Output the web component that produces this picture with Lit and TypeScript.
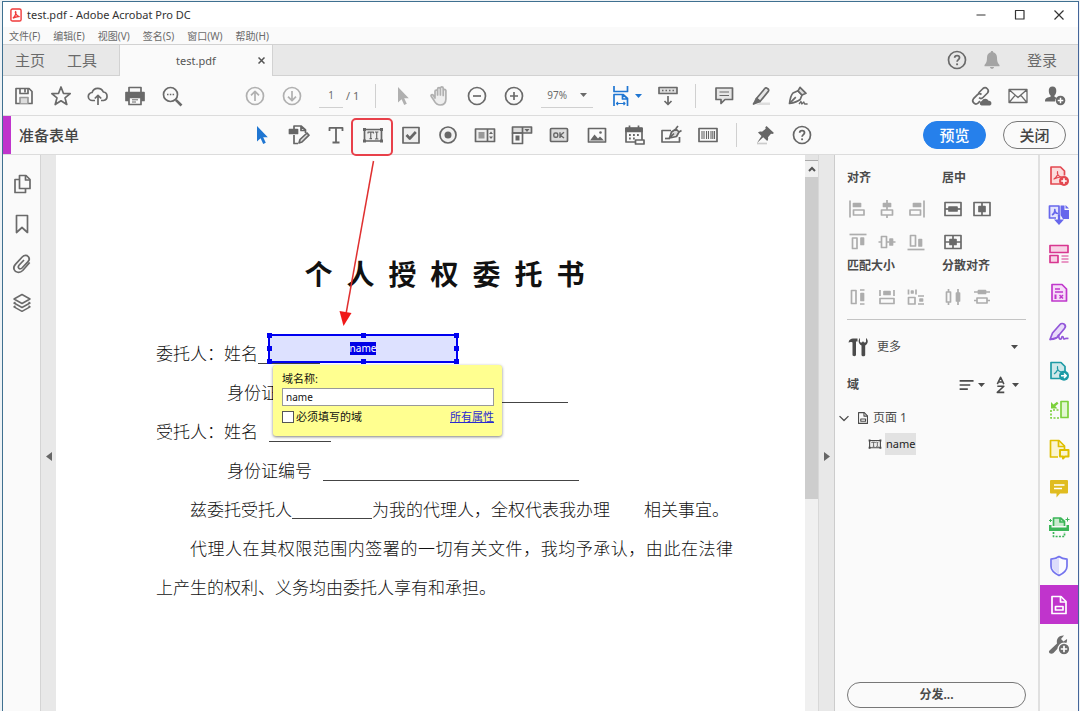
import { LitElement, html, svg, css, SVGTemplateResult } from "lit";
import { customElement, property, state } from "lit/decorators.js";
import { classMap } from "lit/directives/class-map.js";

/* Every glyph is drawn on a 22 x 22 grid and inherits currentColor. */
const glyphs: Record<string, SVGTemplateResult> = {
  save: svg`<path d="M3 3.500h13l3 3v12H3z"/><path d="M7 3.500v5h8v-5"/><path d="M7 18.500v-6h8v6" fill="#ddd" stroke="#999"/><path d="M12 4v3.500"/>`,
  star: svg`<path d="M11 2l2.400 6.300 6.800.4-5.200 4.200 1.800 6.600-5.800-3.700-5.800 3.700 1.800-6.600-5.200-4.200 6.800-.4z"/>`,
  cloud: svg`<path d="M8 15.500H5.500a4 4 0 0 1-.4-8A6 6 0 0 1 16.300 7a4.300 4.300 0 0 1 .2 8.500H14"/><path d="M11 20v-9.500M7.800 13.500l3.200-3.200 3.200 3.200"/>`,
  print: svg`<path d="M5 7V2.500h12V7"/><path d="M2 7.500h18v8h-2.500V12h-13v3.500H2z" fill="currentColor"/><path d="M5 12.500h12v7H5z" fill="#fafafa"/><path d="M8 14.800h6M8 17h4" stroke-width="1"/>`,
  find: svg`<circle cx="9.500" cy="9.500" r="7"/><path d="M14.800 14.800l5.700 5.700" stroke-width="2.600"/><path d="M6 9.500h1.500M8.800 9.500h1.500M11.600 9.500h1.500" stroke-width="1.700"/>`,
  up: svg`<circle cx="11" cy="11" r="8.500"/><path d="M11 16V6.500M7 10.300l4-4 4 4"/>`,
  down: svg`<circle cx="11" cy="11" r="8.500"/><path d="M11 6v9.500M7 11.700l4 4 4-4"/>`,
  pointer: svg`<path d="M6 2v15.500l3.600-3.200 2.600 5.600 2.600-1.200-2.600-5.500h4.600z" fill="currentColor" stroke="none"/>`,
  hand: svg`<path d="M6 13V6.300a1.300 1.300 0 0 1 2.600 0V10 4a1.400 1.400 0 0 1 2.800 0v6-6.700a1.400 1.400 0 0 1 2.800 0V10.500 5.500a1.400 1.400 0 0 1 2.700 0v8.500c0 4-2.300 6-5.700 6-3 0-4.500-1.500-6-4.200l-3-4.500c-.8-1.600 1-2.300 2-1.200z" fill="#eee"/>`,
  minus: svg`<circle cx="11" cy="11" r="8.500"/><path d="M7 11h8"/>`,
  plus: svg`<circle cx="11" cy="11" r="8.500"/><path d="M7 11h8M11 7v8"/>`,
  fit: svg`<path d="M4 1v5.500h13.500V1"/><path d="M4 21V9.500h9l4.500 4V21M12.500 9.500v4.500h5"/><path d="M6.500 18.500h8.500M8 17l-1.500 1.500L8 20M13.500 17l1.500 1.500-1.500 1.500" stroke-width="1.200"/>`,
  scrollmode: svg`<path d="M2 2.500h18v6H2z" fill="#ddd"/><path d="M5 5.500h1.500M8.500 5.500H10M12 5.500h1.500M15.500 5.500H17"/><path d="M11 11v8.500M7.500 16l3.500 3.500 3.500-3.500"/>`,
  comment: svg`<path d="M3 3h16.500v11.500H12l-4 4v-4H3z" fill="#e6e6e6"/><path d="M6.500 7h9.500M6.500 10.500h9.500" stroke-width="1.200"/>`,
  highlight: svg`<path d="M10 17.500h10v2.500H6z" fill="#ddd" stroke="none"/><path d="M6.500 13.500L14.800 3.500a1.700 1.700 0 0 1 2.500-.2l.8.700a1.700 1.700 0 0 1 .2 2.400L10 16.500z" fill="#e6e6e6"/><path d="M6.500 13.500l3.500 3-6.500 2.500 1.200-2z" fill="currentColor"/>`,
  pen: svg`<path d="M2.500 18.500c.5-4 1.500-8.500 3.500-10.500l5-2.200 4 4.200-1.800 4.500c-2.500 2-6.500 3.300-10.700 4z"/><path d="M2.800 18.200l6-6M11 5.800l2-3.500 6 6-4 1.700z" fill="#ddd"/><path d="M12 19l2-2.500.8 2.500 2-2 .8 2h3" stroke-width="1.300"/>`,
  link: svg`<path d="M8.500 8l4.500-4.500a3.200 3.200 0 0 1 4.500 4.500L13 12.500a3 3 0 0 1-4 .2"/><path d="M11.500 9.500a3 3 0 0 0-4 .2L3.500 13.700a3.200 3.200 0 0 0 4.500 4.500l2-2"/><path d="M11.500 20.500a2.300 2.300 0 0 1 .3-4.500 3.800 3.800 0 0 1 6.800-.2 2.500 2.500 0 0 1 1.500 4.700z" fill="currentColor" stroke="none"/>`,
  mail: svg`<path d="M2 4.500h18v13H2zM2.500 5l8.500 7.500L19.500 5M2.500 17l5.800-6.800M19.500 17l-5.800-6.800" stroke-width="1.300"/>`,
  adduser: svg`<path d="M8.500 1.500c2.600 0 4 1.800 3.800 4.500-.1 2-.8 3.600-1.800 4.500v1.200l2 1A5.500 5.500 0 0 0 11 16.500H1c0-3 .8-3.600 5.600-4.800v-1.200C5.500 9.600 4.900 8 4.800 6c-.2-2.700 1.100-4.500 3.700-4.500z" fill="currentColor" stroke="none"/><circle cx="16.500" cy="15.500" r="4.800" fill="currentColor" stroke="none"/><path d="M13.700 15.500h5.600M16.500 12.700v5.600" stroke="#fff" stroke-width="1.500"/>`,
  help: svg`<circle cx="11" cy="11" r="8.500"/><path d="M8.700 8.800c0-3 4.800-3 4.800 0 0 1.800-2.400 1.900-2.400 4" stroke-width="1.800"/><path d="M11.100 14.400v1.800" stroke-width="1.900"/>`,
  bell: svg`<path d="M11 2c.8 0 1.200.5 1.200 1.300 2.600.6 3.800 2.700 3.800 5.200 0 4 .6 5.500 2.500 7.500v1.200h-15V16C5.400 14 6 12.500 6 8.500c0-2.500 1.200-4.600 3.800-5.200C9.800 2.500 10.200 2 11 2zM9 18h4c0 2.400-4 2.400-4 0z" fill="currentColor" stroke="none"/>`,
  editpage: svg`<path d="M6 5V2h7l4.500 4v3M6 11v8.500h4M13 2v4.500h4.500"/><path d="M1.500 5.500h8v4h-8z" fill="currentColor"/><path d="M11 19l1-3.500 7-6.500 2 2.200-7 6.800z" fill="#ddd"/>`,
  text: svg`<path d="M4.500 7V3.800h13V7M11 3.800v14.500M7.500 18.500h7" stroke-width="1.800"/>`,
  field: svg`<path d="M2.500 5.500h17v11.500h-17z" fill="#eee"/><path d="M6 9.500V8.200h5.500v1.300M8.750 8.200v6.500M7.500 14.700h2.500M13 8h1l.7.700.7-.7h1M14.700 8.700v5.600M13 15h1l.7-.7.7.7h1" stroke-width="1.200"/><path d="M1 4h3v3H1zM18 4h3v3h-3zM1 15.500h3v3H1zM18 15.500h3v3h-3z" fill="currentColor" stroke="none"/>`,
  check: svg`<path d="M3 3.500h16v15.500H3z" fill="#eee"/><path d="M6.500 11l3.300 3.500 6-6.500" stroke-width="2.600"/>`,
  radio: svg`<circle cx="11" cy="11" r="8" fill="#f0f0f0"/><circle cx="11" cy="11" r="3.500" fill="currentColor" stroke="none"/>`,
  list: svg`<path d="M1.500 5h19v12.500h-19z" fill="#eee"/><path d="M13.500 5v12.500"/><path d="M4.500 8h6v6.500h-6z" fill="#999" stroke="none"/><path d="M15 10l2-2.500 2 2.500zM15 12.500l2 2.500 2-2.500z" fill="currentColor" stroke="none"/>`,
  combo: svg`<path d="M1.500 3h19v6h-19z" fill="#ddd"/><path d="M1.500 9h10v10.500h-10zM11.500 3v6"/><path d="M13.500 5h5l-2.500 3zM4.500 11.500h4v5h-4z" fill="currentColor" stroke="none"/>`,
  okay: svg`<rect x="2.500" y="4.500" width="17" height="13" rx="1" fill="#ddd"/><rect x="5.800" y="9" width="4" height="4.300" rx="1.600" stroke-width="1.400"/><path d="M12 8.300v5.700M16 8.300l-3.600 2.900 3.600 2.800" stroke-width="1.400"/>`,
  image: svg`<path d="M2.500 4.500h17v13.500h-17z"/><path d="M4 16.500l4.500-6 3.500 4 2-2 4 4z" fill="currentColor" stroke="none"/><circle cx="14.500" cy="8.500" r="1.300" fill="currentColor" stroke="none"/>`,
  date: svg`<path d="M3 4.500h16v13.500H3z"/><path d="M3 4h16v3.500H3z" fill="currentColor"/><path d="M6.500 1.500v4M15.500 1.500v4"/><path d="M6 11h1.800M10 11h1.800M14 11h1.800M6 14.500h1.800M10 14.500h1.800" stroke-width="1.800"/><path d="M12.500 16h8.500v4h-8.500z" fill="#fafafa"/>`,
  sign: svg`<path d="M11 6.500H2v11.500h17.500v-5"/><path d="M5 14.500h5"/><path d="M9.500 14l2-6 4.500-3 3 3-2.500 4.500zM10 13.500l4-4M16 4.500l2-2.500M19 8l2.500-1.500" fill="#ddd"/>`,
  barcode: svg`<path d="M2 4.500h18v13H2z"/><path d="M5 7v8M7 7v8M9.500 7v8M11.500 7v8M14 7v8M15.800 7v8M17.500 7v8" stroke-width="1.100"/>`,
  pin: svg`<path d="M3 19.500h10" stroke="#ccc"/><path d="M12.500 2l7.500 7-1.500 1-1.500-.3-3 3.500c.4 1.800 0 3-.8 3.800l-4-3.800L3 19l4.500-7-3.500-3.500c1-1 2.400-1.200 4-.8l3.700-3-.4-1.500z" fill="currentColor" stroke="none"/>`,
  pages: svg`<path d="M8.500 2.500h6.500l4 4v9H8.500z"/><path d="M14.500 2.500V7H19"/><path d="M8 6.500H4v13h10.500v-4"/>`,
  bookmark: svg`<path d="M5.500 2.500h11v17L11 14.500l-5.500 5z"/>`,
  clip: svg`<path d="M18.700 9.500l-7 8c-3 3-7.500 2-8.600-1-.8-2 0-3.800 1.300-5.200l6.800-7.300c2-2 4.800-2 6.200-.3 1.300 1.600 1 3.500-.4 5l-6 6.300c-1 1-2.500 1-3.200.2-.8-.9-.5-2.200.4-3.200l4.800-5"/>`,
  layers: svg`<path d="M11 1.500l8 4.500-8 4.500L3 6zM4.500 9L3 10l8 4.500 8-4.500-1.500-1M4.500 12.800L3 13.800l8 4.500 8-4.500-1.500-1" stroke-width="1.500"/>`,
  alignL: svg`<path d="M3 2.500v17"/><path d="M6.500 5.500h7v3h-7z" fill="currentColor"/><path d="M6.500 12h10.500v5H6.500z"/>`,
  alignC: svg`<path d="M11 2v3M11 9v3M11 17v3"/><path d="M7.500 5.500h7v3h-7z" fill="currentColor"/><path d="M5.500 12h11v5h-11z"/>`,
  alignR: svg`<path d="M19 2.500v17"/><path d="M8.500 5.500h7v3h-7z" fill="currentColor"/><path d="M5 12h10.500v5H5z"/>`,
  alignT: svg`<path d="M2.500 3.500h17"/><path d="M5.500 7h4.500v10.500H5.500z"/><path d="M14 7h2.500v6.500H14z" fill="currentColor"/>`,
  alignM: svg`<path d="M2.500 11h3M10.500 11h3M17 11h2.500"/><path d="M5.500 5.500h5v11h-5z"/><path d="M14 8h2.500v6H14z" fill="currentColor"/>`,
  alignB: svg`<path d="M2.500 18.500h17"/><path d="M5.500 4.500h5V15h-5z"/><path d="M14 8.500h2.500V15H14z" fill="currentColor"/>`,
  centerV: svg`<path d="M3 4.500h16v13H3z"/><path d="M7 9h8v4H7z" fill="currentColor"/><path d="M3 11h16"/>`,
  centerH: svg`<path d="M3 4.500h16v13H3z"/><path d="M8 8.500h6v5H8z" fill="currentColor"/><path d="M11 4.500v13"/>`,
  centerB: svg`<path d="M3 4.500h16v13H3z"/><path d="M8 8.500h6v5H8z" fill="currentColor"/><path d="M11 4.500v13M3 11h16"/>`,
  matchH: svg`<path d="M4.500 4.500h4.500v13H4.500z"/><path d="M13 4h4.500M13 18h4.500"/><path d="M14 7.500h2.500v7H14z" fill="currentColor"/>`,
  matchW: svg`<path d="M4 4v6M18 4v6M4 12.500h14v5H4z"/><path d="M8 5.500h6v3H8z" fill="currentColor"/>`,
  matchB: svg`<path d="M3.500 3.500v5M11 3.500v5M13 10h6M13 18h6M3.500 11.500H10V18H3.500z"/><path d="M6.500 5h1.500v2H6.500zM15 13h2.500v2H15z" fill="currentColor"/>`,
  distH: svg`<path d="M6.500 3v3M6.500 16v3M16 3v4M16 15v4M4.500 6h4v10h-4z"/><path d="M14.500 7h3v8h-3z" fill="currentColor"/>`,
  distV: svg`<path d="M3 6h4M15 6h4M3 14.500h3M16 14.500h3M6 12h10v5H6z"/><path d="M7.500 4.500h7v3h-7z" fill="currentColor"/>`,
  tools: svg`<path d="M1.500 6.500C2 3.500 4 2.500 6 2.500h4.500v3H9V19c0 1.500-3.500 1.500-3.500 0V6.500c-1.500-.8-2.500-.5-4 0zM13 2v3.500c0 1.300 2.500 1.300 2.500 0h1c0 1.300 2.500 1.300 2.500 0V2c2.500 2 2.500 5.500-.8 7.500V19c0 1.800-3.700 1.800-3.700 0V9.500C11 7.500 11 4 13 2z" fill="currentColor" stroke="none"/>`,
  order: svg`<path d="M2 6h17M2 11h13M2 16h10" stroke-width="2"/>`,
  sort: svg`<path d="M6.500 10L10.500 1.500l4 8.500M8 7.300h5M6.500 12.500h8l-8 7.500h8.500" stroke-width="1.900"/>`,
  chevron: svg`<path d="M4 8l7 7 7-7" stroke-width="2"/>`,
  formpage: svg`<path d="M4 2.500h9l5 5v12H4z"/><path d="M12.500 2.500v5.500H18"/><path d="M7.500 12.500h7.500v3.500H7.500z"/>`,
  logo: svg`<rect x="3" y="1.500" width="16" height="19" rx="2.500" stroke-width="2.200" fill="#fff"/><path d="M6 16c3-2 6-8 4.500-10.500-2 1 1.500 7 5.500 8-3-.7-6 .5-10 2.500" stroke-width="2"/>`,
  createpdf: svg`<path d="M13 19H3V2h9.500l4 4v4.500" fill="#fbdcdc"/><path d="M6 14c2.500-1.500 4-4.500 3.500-7.500-.6 3 1 5.300 4.500 5.500-3 0-5 .5-8 2z" stroke-width="1.200"/><circle cx="16" cy="16" r="5" fill="currentColor" stroke="none"/><path d="M13.300 16h5.400M16 13.300v5.400" stroke="#fff" stroke-width="1.600"/>`,
  combine: svg`<path d="M8 14H1.500V2H11v9" fill="#e4e4fd"/><path d="M4 11c2-1 3-3.500 2.800-5.500 0 2.500 1 4 3.200 4"/><path d="M12.500 1.500h4v4.500h4.500v9H15l-2.500-4z" fill="currentColor" stroke="none"/><path d="M17.500 1l3.500 3.500h-3.500z" fill="currentColor" stroke="none"/><path d="M11 11v5" stroke-width="2.400"/><path d="M6 15.500h10L11 21z" fill="currentColor" stroke="none"/>`,
  organize: svg`<path d="M2 2.500h18v7H2zM2 12.500h8v7H2z" fill="#f8d3e6"/><path d="M13.500 13h7M13.500 16h7M13.500 19h7" stroke-width="1.200"/>`,
  editpdf: svg`<path d="M4 2.500h10l4.500 4.500v12H4z" fill="#f6dcf8"/><path d="M7 7h5M7 10h8" stroke-width="1.500"/><path d="M7.500 12.500v4.500" stroke-width="2"/><path d="M11.500 13l3.500 3.500M15 13l-3.500 3.500" stroke-width="1.500"/>`,
  signpen: svg`<path d="M2 18.500l2.500-6.500L12 3.500a3 3 0 0 1 4.500 4L9 16.500z" fill="#e8dafa"/><path d="M2 18.500c4 0 7.500-.5 8.500-4.500.5 3 .5 4.500 2.500 4 1-.3 0-2.500 1.500-2.500s.3 3 2 2.500 1.500-1 4-.5" stroke-width="1.600"/>`,
  exportpdf: svg`<path d="M13 18.500H3v-16h10l4 4v4.500" fill="#cfe8ea"/><path d="M6 14c2.500-1.500 4-4.500 3.500-7.500-.6 3 1 5.300 4.500 5.500" stroke-width="1.200"/><circle cx="16" cy="15.800" r="5" fill="currentColor" stroke="none"/><path d="M13 15.800h5M16 13.500l2.300 2.300L16 18" stroke="#fff" stroke-width="1.500"/>`,
  rearrange: svg`<path d="M13 2.500h7v16h-7z" fill="#e2f7d2"/><path d="M3 11v8h8M5 11h6.500" stroke-dasharray="2 1.500"/><path d="M3 3v6.500h6.500L7.300 7.300 10.500 4.500 9 2.800 5.500 5.500z" fill="currentColor" stroke="none"/>`,
  sendcomment: svg`<path d="M10 19H2.500V2.500H11L16.500 8v3" fill="#faf4cf"/><path d="M10.500 2.500V8.500h6"/><path d="M12 12h8.500v6.500H17l-2 2v-2h-3z" fill="#faf4cf" stroke-width="2"/>`,
  note: svg`<path d="M3 3h16q1 0 1 1v11.500q0 1-1 1h-7l-3.500 4v-4H3q-1 0-1-1V4q0-1 1-1z" fill="currentColor" stroke="none"/><path d="M6 8h10.500M6 11.500h8" stroke="#fff" stroke-width="1.400"/>`,
  scan: svg`<path d="M5.500 10V2h7l4 3.500V10" fill="#c9ebce"/><path d="M12 2v4h4"/><path d="M1 9h2.500v2.500h15V9H21v6H1z" fill="currentColor" stroke="none"/><path d="M5.500 16v4.500h11V16" stroke-dasharray="2 1.300"/><path d="M2.500 3v3M1 4.500h3M19.500 1.500v4M17.500 3.500h4" stroke-width="1"/>`,
  shield: svg`<path d="M11 1.500c2.500 1.800 5 2.500 8 2.700v7c0 4-3.500 7-8 9.300-4.500-2.300-8-5.300-8-9.300v-7c3-.2 5.500-.9 8-2.700z" fill="#fafaff"/><path d="M11 3v16c-4-2.300-7-4.700-7-8V5c3 0 5-.8 7-2z" fill="#dcdcfb" stroke="none"/>`,
  wrench: svg`<path d="M1.500 17.500L9 10.500C8 6 11 2 16 2.500L13 6l2.500 2.500L19 6c.5 3-1 6-4.500 6.700L12 13l-6.500 7c-2.500 2-6-.5-4-2.500z" fill="currentColor" stroke="none"/><circle cx="16" cy="16" r="5.800" fill="currentColor" stroke="#fafafa" stroke-width="1.300"/><path d="M12.800 16h6.400M16 12.800v6.400" stroke="#fff"/>`,
};

const icon = (name: string, size = "") =>
  html`<svg class="icon ${size}" viewBox="0 0 22 22" aria-hidden="true">${glyphs[name]}</svg>`;

const caret = html`<svg class="caret" viewBox="0 0 7 4" aria-hidden="true"><path d="M0 0h7L3.500 4z" /></svg>`;

const iconStyles = css`
  .icon {
    width: 22px;
    height: 22px;
    display: block;
    flex: none;
    fill: none;
    stroke: currentColor;
    stroke-width: 1.7;
    stroke-linejoin: round;
  }
  .icon.small {
    width: 14px;
    height: 14px;
  }
  .icon.medium {
    width: 18px;
    height: 18px;
  }
  .caret {
    width: 7px;
    height: 4px;
    display: block;
    flex: none;
    fill: currentColor;
  }
  * {
    box-sizing: border-box;
  }
  button,
  input,
  select {
    font: inherit;
    color: inherit;
    margin: 0;
    padding: 0;
    border: 0;
    background: none;
    border-radius: 0;
  }
  button {
    display: flex;
    align-items: center;
    justify-content: center;
  }
`;

@customElement("form-document")
class FormDocument extends LitElement {
  @property() fieldName = "name";

  static styles = [
    iconStyles,
    css`
      :host {
        display: block;
        position: relative;
        flex: 1;
        min-width: 0;
        overflow: hidden;
        background: #fff;
        color: #111;
        padding: 99px 72px 0 100px;
        font-size: 17px;
        line-height: 39px;
        font-weight: 300;
      }
      h1 {
        margin: 0 0 40px;
        font-size: 28px;
        line-height: 40px;
        font-weight: 700;
        text-align: center;
        white-space: nowrap;
      }
      p {
        margin: 0;
        text-align: justify;
      }
      .body {
        text-indent: 2em;
      }
      .row {
        display: flex;
        align-items: center;
        white-space: nowrap;
      }
      .indent {
        padding-left: 71px;
      }
      .blank {
        height: 20px;
        width: 256px;
        border-bottom: 1px solid #444;
      }
      .blank.short {
        width: 62px;
      }
      .gap {
        margin-left: 11px;
      }
      .inline-blank {
        display: inline-block;
        width: 80px;
        height: 16px;
        border-bottom: 1px solid #444;
        vertical-align: -3px;
      }
      .space {
        display: inline-block;
        width: 34px;
      }
      .field {
        position: absolute;
        left: 212px;
        top: 179px;
        width: 190px;
        height: 29px;
        border: 2px solid #0000f0;
        background: #dde1ff;
        display: flex;
        align-items: center;
        justify-content: center;
        font-size: 10px;
        line-height: 13px;
        font-weight: 400;
      }
      .field-name {
        background: #0000e6;
        color: #fff;
        height: 13px;
      }
      .handle {
        position: absolute;
        width: 5px;
        height: 5px;
        background: #0000f0;
      }
      .n { top: -3px; }
      .s { bottom: -3px; }
      .m { top: 10px; }
      .w { left: -3px; }
      .e { right: -3px; }
      .c { left: 91px; }
      .popup {
        position: absolute;
        left: 217px;
        top: 210px;
        width: 229px;
        padding: 6px 8px 11px 9px;
        border-radius: 3px;
        background: #ffff90;
        box-shadow: 0 1px 3px rgba(0, 0, 0, 0.5);
        font-size: 11px;
        line-height: 16px;
        font-weight: 400;
      }
      .caption {
        display: block;
      }
      .name-input {
        display: block;
        width: 100%;
        height: 18px;
        margin: 1px 0 3px;
        padding: 0 3px;
        border: 1px solid #999;
        background: #fff;
        font-size: 10px;
      }
      .options {
        display: flex;
        justify-content: space-between;
      }
      .required {
        display: flex;
        align-items: center;
        gap: 2px;
      }
      .box {
        appearance: none;
        width: 12px;
        height: 12px;
        border: 1px solid #555;
        background: #fff;
      }
      a {
        color: #2a2ad0;
      }
    `,
  ];

  render() {
    const handles = ["n w", "n c", "n e", "m w", "m e", "s w", "s c", "s e"];
    return html`
      <h1>个&ensp;人&ensp;授&ensp;权&ensp;委&ensp;托&ensp;书</h1>
      <div class="row">委托人：姓名<span class="blank short"></span></div>
      <div class="row indent">身份证编号<span class="blank"></span></div>
      <div class="row">受托人：姓名<span class="blank short gap"></span></div>
      <div class="row indent">身份证编号<span class="blank gap"></span></div>
      <p class="body">兹委托受托人<span class="inline-blank"></span>为我的代理人，全权代表我办理<span class="space"></span>相关事宜。</p>
      <p class="body">代理人在其权限范围内签署的一切有关文件，我均予承认，由此在法律上产生的权利、义务均由委托人享有和承担。</p>
      <div class="field">
        <span class="field-name">${this.fieldName}</span>
        ${handles.map((h) => html`<span class="handle ${h}"></span>`)}
      </div>
      <div class="popup">
        <label class="caption" for="field-name">域名称:</label>
        <input
          id="field-name"
          class="name-input"
          .value=${this.fieldName}
          @input=${(e: Event) => (this.fieldName = (e.target as HTMLInputElement).value)}
        />
        <div class="options">
          <label class="required"><input class="box" type="checkbox" />必须填写的域</label>
          <a href="#properties">所有属性</a>
        </div>
      </div>
    `;
  }
}

@customElement("form-panel")
class FormPanel extends LitElement {
  static styles = [
    iconStyles,
    css`
      :host {
        display: flex;
        flex-direction: column;
        flex: none;
        width: 204px;
        padding: 15px 12px 4px;
        background: #fafafa;
        border-left: 1px solid #ccc;
        color: #4b4b4b;
        font-size: 12px;
        line-height: 16px;
      }
      .groups {
        display: grid;
        grid-template-columns: 95px 1fr;
        padding-bottom: 8px;
        border-bottom: 1px solid #c4c4c4;
      }
      h2 {
        margin: 0;
        font-size: 12px;
        line-height: 16px;
        font-weight: 700;
      }
      .icons {
        display: grid;
        grid-template-columns: repeat(3, 29px);
        grid-auto-rows: 33px;
        color: #adadad;
        padding-top: 6px;
        margin-left: -4px;
      }
      .icons.tall {
        height: 72px;
      }
      .icons.short {
        height: 37px;
      }
      .icons.strong {
        color: #6a6a6a;
      }
      .more {
        display: flex;
        height: 53px;
        gap: 8px;
        padding: 0 8px 0 0;
        font-weight: 400;
      }
      .more-label {
        flex: 1;
        text-align: left;
      }
      .fields-head {
        display: flex;
        align-items: center;
        height: 24px;
      }
      .fields-head h2 {
        flex: 1;
      }
      .menu {
        gap: 1px;
        margin-left: 7px;
      }
      .fields-head .menu:last-child {
        margin-right: 7px;
      }
      .menu .medium {
        margin-right: 1px;
      }
      .tree {
        margin: 10px 0 0;
        padding: 0;
        list-style: none;
      }
      .node {
        display: flex;
        align-items: center;
        height: 22px;
        gap: 3px;
      }
      .parent {
        margin-left: -10px;
      }
      .leaf {
        height: 30px;
        padding-left: 21px;
      }
      .parent .icon + .icon {
        margin-left: 2px;
      }
      .selected {
        background: #e2e2e2;
        padding: 3px 1px;
        color: #222;
        font-size: 11px;
      }
      .distribute {
        margin-top: auto;
        height: 26px;
        border: 1px solid #777;
        border-radius: 13px;
        font-weight: 700;
      }
    `,
  ];

  tools(names: string[]) {
    return names.map((n) => html`<button aria-label=${n}>${icon(n)}</button>`);
  }

  render() {
    return html`
      <div class="groups">
        <h2>对齐</h2>
        <h2>居中</h2>
        <div class="icons tall">
          ${this.tools(["alignL", "alignC", "alignR", "alignT", "alignM", "alignB"])}
        </div>
        <div class="icons strong tall">${this.tools(["centerV", "centerH"])}<span></span>${this.tools(["centerB"])}</div>
        <h2>匹配大小</h2>
        <h2>分散对齐</h2>
        <div class="icons short">${this.tools(["matchH", "matchW", "matchB"])}</div>
        <div class="icons short">${this.tools(["distH", "distV"])}</div>
      </div>
      <button class="more">${icon("tools")}<span class="more-label">更多</span>${caret}</button>
      <div class="fields-head">
        <h2>域</h2>
        <button class="menu" aria-label="order">${icon("order", "medium")}${caret}</button>
        <button class="menu" aria-label="sort">${icon("sort", "medium")}${caret}</button>
      </div>
      <ul class="tree">
        <li class="node parent">${icon("chevron", "small")}${icon("formpage", "small")}<span>页面 1</span></li>
        <li class="node leaf">${icon("field", "small")}<span class="selected">name</span></li>
      </ul>
      <button class="distribute">分发...</button>
    `;
  }
}

@customElement("app-root")
class AppRoot extends LitElement {
  @state() tool = "pointer";

  static styles = [
    iconStyles,
    css`
      :host {
        display: flex;
        flex-direction: column;
        height: 100vh;
        padding: 1px 1px 0 2px;
        background: #eef2f5;
        color: #6a6a6a;
        font-family: "Noto Sans", "Noto Sans CJK SC", sans-serif;
        font-size: 11px;
        line-height: 16px;
      }
      .window {
        display: flex;
        flex-direction: column;
        flex: 1;
        min-height: 0;
        border: 1px solid #3f7090;
        border-right-color: #44659a;
        border-bottom: 0;
        background: #fafafa;
      }
      .titlebar {
        display: flex;
        align-items: center;
        height: 25px;
        padding: 0 8px 0 6px;
        gap: 4px;
        background: #fff;
        color: #333;
      }
      .logo {
        color: #f03a3a;
      }
      .title {
        flex: 1;
      }
      .winbtn {
        width: 23px;
        margin-left: 12px;
      }
      .menubar {
        display: flex;
        height: 17px;
        padding: 0 6px;
        gap: 13px;
        font-size: 10px;
      }
      .tabs {
        display: flex;
        align-items: center;
        height: 32px;
        background: #e8e8e8;
        border: 1px solid #d2d2d2;
        border-width: 1px 0;
        font-size: 15px;
      }
      .home {
        margin-left: 12px;
      }
      .home + .home {
        margin-left: 22px;
        margin-right: 22px;
      }
      .doc-tab {
        align-self: stretch;
        display: flex;
        align-items: center;
        width: 154px;
        margin-bottom: -1px;
        padding: 0 7px 0 56px;
        background: #fafafa;
        border: 1px solid #d2d2d2;
        border-width: 0 1px;
        font-size: 11px;
        color: #555;
      }
      .doc-tab span {
        flex: 1;
      }
      .cross {
        width: 7px;
        height: 7px;
        fill: none;
        stroke: #555;
        stroke-width: 1.5;
      }
      .account {
        display: flex;
        align-items: center;
        margin-left: auto;
        padding-right: 21px;
        gap: 13px;
      }
      .bell {
        color: #a4a4a4;
      }
      .login {
        margin-left: 11px;
      }
      .bar {
        display: flex;
        align-items: center;
        height: 40px;
        border-bottom: 1px solid #dcdcdc;
      }
      .bar.form {
        height: 39px;
        color: #666;
      }
      .tool {
        width: 37px;
        height: 38px;
        position: relative;
      }
      .file-tools {
        display: flex;
        margin: 0 46px 0 2px;
      }
      .faint {
        color: #b0b0b0;
      }
      .blue {
        color: #1f76d2;
      }
      .page-input {
        width: 24px;
        height: 25px;
        margin: 0 3px 0 9px;
        text-align: center;
        font-size: 10px;
        border-bottom: 1px solid #d0d0d0;
      }
      .rule {
        width: 1px;
        height: 24px;
        margin: 0 9px;
        background: #d0d0d0;
      }
      .first-rule {
        margin: 0 8px 0 16px;
      }
      .zoom {
        display: flex;
        align-items: center;
        width: 52px;
        height: 25px;
        margin: 0 9px;
        border-bottom: 1px solid #d0d0d0;
        font-size: 10px;
      }
      .zoom-select {
        appearance: none;
        flex: 1;
        min-width: 0;
        padding-left: 6px;
      }
      .zoom .caret {
        margin-right: 6px;
      }
      .tool .icon + .caret {
        margin-left: 3px;
      }
      .wide {
        width: 47px;
      }
      .share {
        display: flex;
        margin-left: auto;
        padding-right: 5px;
      }
      .form-title {
        align-self: stretch;
        display: flex;
        align-items: center;
        width: 240px;
        margin: 0;
        padding-left: 8px;
        border-left: 8px solid #c034cc;
        font-size: 15px;
        font-weight: 500;
        color: #444;
      }
      .form-tools {
        display: flex;
        width: 484px;
      }
      .form-tools .tool {
        flex: 1;
      }
      .marked {
        position: absolute;
        left: -4px;
        top: 2px;
        width: 42px;
        height: 38px;
        border: 2px solid #e8404a;
        border-radius: 5px;
        z-index: 2;
      }
      .arrow {
        position: absolute;
        left: -20px;
        top: 40px;
        width: 44px;
        height: 172px;
        z-index: 2;
        pointer-events: none;
      }
      .actions {
        display: flex;
        gap: 17px;
        margin-left: auto;
        padding-right: 12px;
      }
      .pill {
        width: 63px;
        height: 28px;
        border: 1px solid #777;
        border-radius: 14px;
        font-size: 15px;
        font-weight: 500;
        color: #444;
      }
      .primary {
        background: #2680eb;
        border-color: #2680eb;
        color: #fff;
      }
      .main {
        display: flex;
        flex: 1;
        min-height: 0;
      }
      .nav {
        display: flex;
        flex-direction: column;
        width: 38px;
        padding-top: 9px;
        border-right: 1px solid #d4d4d4;
      }
      .nav .tool {
        height: 40px;
      }
      .gutter {
        display: flex;
        align-items: center;
        width: 15px;
        padding: 46px 0 0 5px;
        background: #e8e8e8;
        color: #666;
      }
      .edge {
        width: 6px;
        height: 9px;
        fill: currentColor;
      }
      .scroll {
        display: flex;
        flex-direction: column;
        width: 14px;
        background: #f0f0f0;
        border-right: 1px solid #d8d8d8;
      }
      .split {
        height: 6px;
        background: #e4e4e4;
        border-bottom: 1px solid #aaa;
      }
      .scroll-up {
        height: 16px;
      }
      .chevron-up {
        width: 8px;
        height: 6px;
        fill: none;
        stroke: #555;
        stroke-width: 2;
      }
      .thumb {
        flex: 0 1 322px;
        background: #cdcdcd;
      }
      .rail {
        display: flex;
        flex-direction: column;
        width: 40px;
        padding-top: 1px;
        border-left: 2px solid #e0e0e0;
      }
      .rail .tool {
        width: 100%;
        height: 39px;
        flex: none;
      }
      .tool.active {
        background: #c034cc;
      }
      .c0 { color: #e34850; }
      .c1 { color: #6767ec; }
      .c2 { color: #d83790; }
      .c3 { color: #c038cc; }
      .c4 { color: #9256d9; }
      .c5 { color: #1d9aa5; }
      .c6 { color: #7cd03c; }
      .c7 { color: #dfbf00; }
      .c8 { color: #e0bc20; }
      .c9 { color: #3bb558; }
      .c10 { color: #7373ee; }
      .c11 { color: #fff; }
      .c12 { color: #6e6e6e; }
    `,
  ];

  tools(names: string[], extra = "") {
    return names.map((n) => html`<button class="tool ${extra}" aria-label=${n}>${icon(n)}</button>`);
  }

  render() {
    const menus = ["文件(F)", "编辑(E)", "视图(V)", "签名(S)", "窗口(W)", "帮助(H)"];
    const formTools = [
      "pointer", "editpage", "text", "field", "check", "radio", "list",
      "combo", "okay", "image", "date", "sign", "barcode",
    ];
    const rail = [
      "createpdf", "combine", "organize", "editpdf", "signpen", "exportpdf", "rearrange",
      "sendcomment", "note", "scan", "shield", "formpage", "wrench",
    ];
    return html`
      <div class="window">
        <header class="titlebar">
          <span class="logo">${icon("logo", "small")}</span>
          <span class="title">test.pdf - Adobe Acrobat Pro DC</span>
          <button class="winbtn" aria-label="minimize"><svg class="icon small" viewBox="0 0 14 14"><path d="M2.500 7h9" stroke-width="1" /></svg></button>
          <button class="winbtn" aria-label="maximize"><svg class="icon small" viewBox="0 0 14 14"><path d="M2.500 2.500h8.500v8.500H2.500z" stroke-width="1.200" /></svg></button>
          <button class="winbtn" aria-label="close"><svg class="icon small" viewBox="0 0 14 14"><path d="M2.500 2.500l9 9M11.500 2.500l-9 9" stroke-width="1.200" /></svg></button>
        </header>
        <nav class="menubar">${menus.map((m) => html`<button>${m}</button>`)}</nav>
        <div class="tabs">
          <button class="home">主页</button>
          <button class="home">工具</button>
          <div class="doc-tab">
            <span>test.pdf</span>
            <button aria-label="close tab"><svg class="cross" viewBox="0 0 7 7"><path d="M.5.5l6 6M6.500.5l-6 6" /></svg></button>
          </div>
          <div class="account">
            <button aria-label="help">${icon("help")}</button>
            <button class="bell" aria-label="notifications">${icon("bell")}</button>
            <button class="login">登录</button>
          </div>
        </div>
        <div class="bar">
          <div class="file-tools">${this.tools(["save", "star", "cloud", "print", "find"])}</div>
          ${this.tools(["up", "down"], "faint")}
          <input class="page-input" value="1" aria-label="page" />
          <span>/ 1</span>
          <span class="rule first-rule"></span>
          ${this.tools(["pointer", "hand"], "faint")} ${this.tools(["minus", "plus"])}
          <div class="zoom">
            <select class="zoom-select" aria-label="zoom"><option>97%</option></select>${caret}
          </div>
          <button class="tool wide blue" aria-label="fit">${icon("fit")}${caret}</button>
          ${this.tools(["scrollmode"])}
          <span class="rule"></span>
          ${this.tools(["comment", "highlight", "pen"])}
          <div class="share">${this.tools(["link", "mail", "adduser"])}</div>
        </div>
        <div class="bar form">
          <h1 class="form-title">准备表单</h1>
          <div class="form-tools">
            ${formTools.map(
              (n) => html`<button
                class=${classMap({ tool: true, blue: n === this.tool })}
                aria-label=${n}
                @click=${() => (this.tool = n)}
              >
                ${icon(n)}
                ${n === "field"
                  ? html`<span class="marked"></span>
                      <svg class="arrow" viewBox="0 0 44 172" aria-hidden="true">
                        <path d="M38.500 5L11 158" fill="none" stroke="#e03030" stroke-width="1.500" />
                        <path d="M8.500 170L4.500 155l12 2z" fill="#f01818" />
                      </svg>`
                  : ""}
              </button>`
            )}
          </div>
          <span class="rule"></span>
          ${this.tools(["pin", "help"])}
          <div class="actions">
            <button class="pill primary">预览</button>
            <button class="pill">关闭</button>
          </div>
        </div>
        <main class="main">
          <nav class="nav">${this.tools(["pages", "bookmark", "clip", "layers"])}</nav>
          <div class="gutter"><svg class="edge" viewBox="0 0 6 9"><path d="M6 0v9L0 4.500z" /></svg></div>
          <form-document></form-document>
          <div class="scroll">
            <div class="split"></div>
            <button class="scroll-up" aria-label="scroll up"><svg class="chevron-up" viewBox="0 0 8 6"><path d="M1 5l3-3 3 3" /></svg></button>
            <div class="thumb"></div>
          </div>
          <div class="gutter"><svg class="edge" viewBox="0 0 6 9"><path d="M0 0v9l6-4.500z" /></svg></div>
          <form-panel></form-panel>
          <nav class="rail">
            ${rail.map(
              (n, i) => html`<button
                class="tool c${i} ${n === "formpage" ? "active" : ""}"
                aria-label=${n}
              >${icon(n)}</button>`
            )}
          </nav>
        </main>
      </div>
    `;
  }
}
